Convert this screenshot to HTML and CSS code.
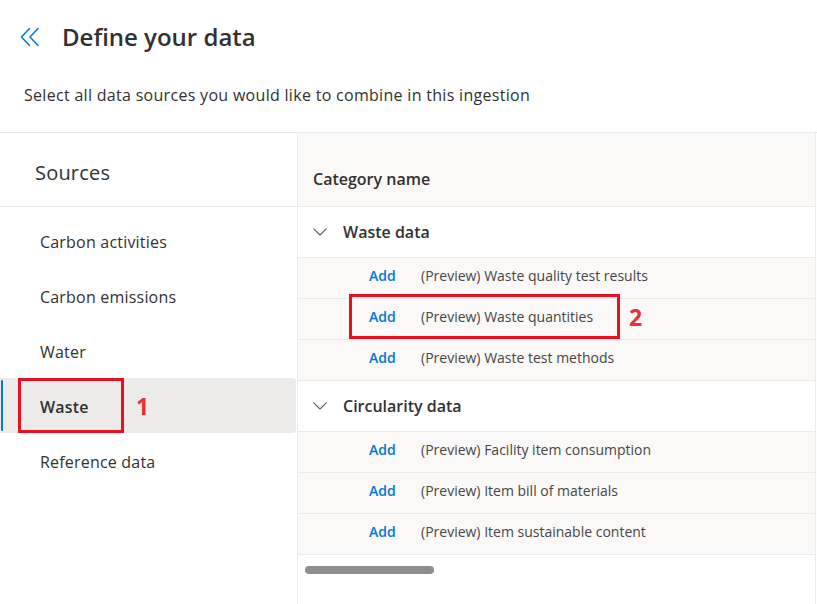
FILE: index.html
```html
<!DOCTYPE html>
<html lang="en">
<head>
<meta charset="utf-8">
<title>Define your data</title>
<link rel="stylesheet" href="styles.css">
</head>
<body>
<div class="page">
  <header class="header">
    <button class="back" aria-label="Back">
      <svg width="20" height="20" viewBox="0 0 20 20" fill="none" stroke="#0078d4" stroke-width="1.5" stroke-linecap="round" stroke-linejoin="round">
        <path d="M9.5 1.5 L1.5 10 L9.5 18.5"/>
        <path d="M18 1.5 L10 10 L18 18.5"/>
      </svg>
    </button>
    <h1 class="title">Define your data</h1>
  </header>
  <p class="subtitle">Select all data sources you would like to combine in this ingestion</p>

  <div class="main">
    <aside class="sidebar">
      <div class="sources-title">Sources</div>
      <ul class="nav">
        <li class="nav-item">Carbon activities</li>
        <li class="nav-item">Carbon emissions</li>
        <li class="nav-item">Water</li>
        <li class="nav-item selected">Waste
          <span class="callout callout-1"></span>
          <span class="callout-num num-1">1</span>
        </li>
        <li class="nav-item">Reference data</li>
      </ul>
    </aside>

    <section class="content">
      <div class="col-header">Category name</div>

      <div class="group-row">
        <svg class="chev" width="14" height="8" viewBox="0 0 14 8" fill="none" stroke="#605e5c" stroke-width="1.1" stroke-linecap="round" stroke-linejoin="round"><path d="M0.8 0.8 L7 7 L13.2 0.8"/></svg>
        <span>Waste data</span>
      </div>
      <div class="item-row"><span class="add">Add</span><span class="item-name">(Preview) Waste quality test results</span></div>
      <div class="item-row">
        <span class="add">Add</span><span class="item-name">(Preview) Waste quantities</span>
        <span class="callout callout-2"></span>
        <span class="callout-num num-2">2</span>
      </div>
      <div class="item-row"><span class="add">Add</span><span class="item-name">(Preview) Waste test methods</span></div>

      <div class="group-row">
        <svg class="chev" width="14" height="8" viewBox="0 0 14 8" fill="none" stroke="#605e5c" stroke-width="1.1" stroke-linecap="round" stroke-linejoin="round"><path d="M0.8 0.8 L7 7 L13.2 0.8"/></svg>
        <span>Circularity data</span>
      </div>
      <div class="item-row"><span class="add">Add</span><span class="item-name">(Preview) Facility item consumption</span></div>
      <div class="item-row"><span class="add">Add</span><span class="item-name">(Preview) Item bill of materials</span></div>
      <div class="item-row"><span class="add">Add</span><span class="item-name">(Preview) Item sustainable content</span></div>

      <div class="scroll-area"><div class="scroll-thumb"></div></div>
    </section>
  </div>
</div>
</body>
</html>
```

FILE: styles.css
```css
* { box-sizing: border-box; }

html, body {
  margin: 0;
  padding: 0;
  background: #ffffff;
}

body {
  font-family: "Segoe UI", "Open Sans", "Noto Sans", sans-serif;
  color: #323130;
  overflow: hidden;
}

.page {
  width: 817px;
  height: 604px;
  display: flex;
  flex-direction: column;
}

.header {
  display: flex;
  align-items: center;
  height: 72px;
  padding-left: 20px;
  padding-top: 2px;
}

.back {
  border: 0;
  background: transparent;
  padding: 0;
  margin: 0;
  width: 20px;
  height: 20px;
  display: flex;
  align-items: center;
  justify-content: center;
  cursor: pointer;
}

.title {
  margin: 0 0 0 22px;
  font-size: 24px;
  font-weight: 600;
  line-height: 30px;
  color: #323130;
  letter-spacing: 0;
}

.subtitle {
  margin: 0;
  padding-left: 24px;
  font-size: 16px;
  letter-spacing: 0.3px;
  line-height: 22px;
  height: 60px;
  padding-top: 12px;
  color: #323130;
}

.main {
  flex: 1;
  display: flex;
  border-top: 1px solid #edebe9;
}

.sidebar {
  width: 298px;
  flex: none;
  border-right: 1px solid #edebe9;
}

.sources-title {
  height: 74px;
  padding-left: 35px;
  padding-top: 5px;
  display: flex;
  align-items: center;
  font-size: 20px;
  letter-spacing: 0.2px;
  border-bottom: 1px solid #edebe9;
}

.nav {
  list-style: none;
  margin: 0;
  padding: 6px 0 0 0;
}

.nav-item {
  position: relative;
  height: 55px;
  display: flex;
  align-items: center;
  padding-left: 40px;
  padding-top: 2px;
  font-size: 16px;
  letter-spacing: 0.2px;
  color: #323130;
}

.nav-item.selected {
  background: #edebe9;
  font-weight: 600;
  border-radius: 0 3px 3px 0;
  margin-right: 1px;
}

.nav-item.selected::before {
  content: "";
  position: absolute;
  left: 1px;
  top: 2px;
  bottom: 2px;
  width: 2px;
  background: #0078d4;
  border-radius: 1px;
}

.callout {
  position: absolute;
  border: 3px solid #e81123;
}

.callout-1 {
  left: 18px;
  top: 0;
  width: 106px;
  height: 55px;
}

.callout-num {
  position: absolute;
  color: #e8303a;
  font-family: "Open Sans", "Noto Sans", sans-serif;
  font-weight: 700;
  font-size: 23px;
  line-height: 24px;
  letter-spacing: 0;
}

.num-1 {
  left: 136px;
  top: 16px;
}

.content {
  flex: 1;
  border-right: 1px solid #edebe9;
  margin-right: 1px;
}

.col-header {
  height: 74px;
  background: #faf9f8;
  border-bottom: 1px solid #edebe9;
  display: flex;
  align-items: center;
  padding-left: 15px;
  padding-top: 18px;
  font-size: 16px;
  font-weight: 600;
}

.group-row {
  height: 51px;
  display: flex;
  align-items: center;
  padding-left: 15px;
  border-bottom: 1px solid #edebe9;
  font-size: 16px;
  font-weight: 600;
  background: #ffffff;
}

.group-row .chev {
  margin-right: 16px;
  flex: none;
}

.item-row {
  position: relative;
  height: 41px;
  display: flex;
  align-items: center;
  padding-left: 71px;
  padding-bottom: 5px;
  background: #faf9f8;
  border-bottom: 1px solid #edebe9;
  font-size: 14px;
}

.add {
  color: #0078d4;
  font-weight: 600;
  width: 52px;
  flex: none;
}

.item-name {
  color: #484644;
}

.callout-2 {
  left: 51px;
  top: -5px;
  width: 271px;
  height: 45px;
}

.num-2 {
  left: 331px;
  top: 6px;
}

.scroll-area {
  height: 40px;
  padding: 11px 0 0 7px;
}

.scroll-thumb {
  width: 129px;
  height: 8px;
  border-radius: 4px;
  background: #8e8e8e;
}
```
